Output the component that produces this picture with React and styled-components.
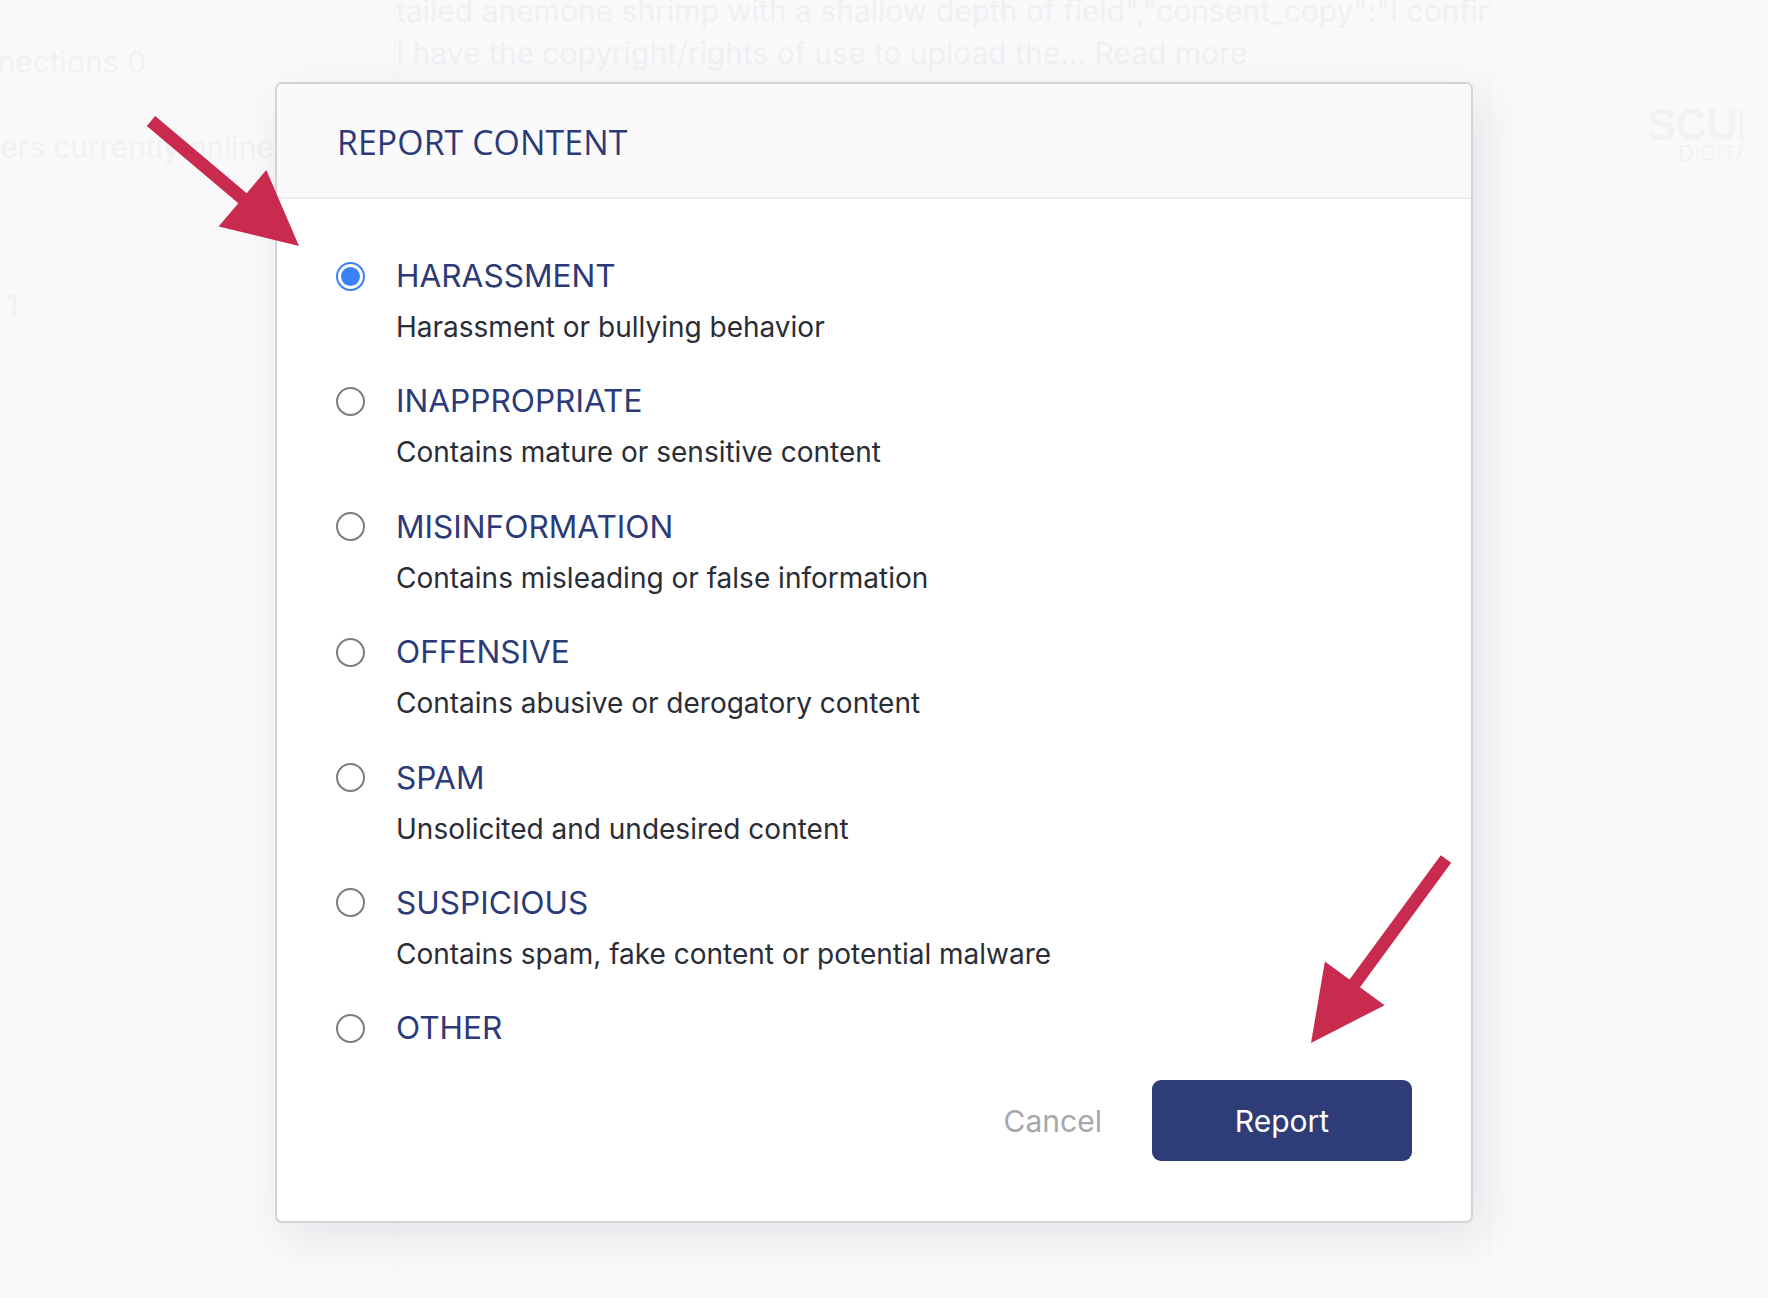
import styled, { createGlobalStyle } from "styled-components";
import { useState } from "react";

const GlobalStyle = createGlobalStyle`
  html, body {
    margin: 0;
    padding: 0;
    background: #f9f9fb;
  }
  * {
    box-sizing: border-box;
  }
`;

const options = [
  { id: "harassment", label: "HARASSMENT", desc: "Harassment or bullying behavior" },
  { id: "inappropriate", label: "INAPPROPRIATE", desc: "Contains mature or sensitive content" },
  { id: "misinformation", label: "MISINFORMATION", desc: "Contains misleading or false information" },
  { id: "offensive", label: "OFFENSIVE", desc: "Contains abusive or derogatory content" },
  { id: "spam", label: "SPAM", desc: "Unsolicited and undesired content" },
  { id: "suspicious", label: "SUSPICIOUS", desc: "Contains spam, fake content or potential malware" },
  { id: "other", label: "OTHER" },
];

const arrows = [
  { from: [151, 121], to: [299, 246] },
  { from: [1446, 859], to: [1311, 1043] },
];

function arrowPoints([x1, y1], [x2, y2], shaft = 13, headLen = 74, headHalf = 37) {
  const dx = x2 - x1;
  const dy = y2 - y1;
  const len = Math.hypot(dx, dy);
  const ux = dx / len;
  const uy = dy / len;
  const nx = -uy;
  const ny = ux;
  const bx = x2 - ux * headLen;
  const by = y2 - uy * headLen;
  const s = shaft / 2;
  const pts = [
    [x1 + nx * s, y1 + ny * s],
    [bx + nx * s, by + ny * s],
    [bx + nx * headHalf, by + ny * headHalf],
    [x2, y2],
    [bx - nx * headHalf, by - ny * headHalf],
    [bx - nx * s, by - ny * s],
    [x1 - nx * s, y1 - ny * s],
  ];
  return pts.map((p) => p.map((v) => v.toFixed(1)).join(",")).join(" ");
}

function App() {
  const [selected, setSelected] = useState("harassment");

  return (
    <Page>
      <GlobalStyle />
      <BgPage>
        <Sidebar>
          <FaintText $indent={-60}>Connections 0</FaintText>
          <SideDivider />
          <FaintText $indent={-38} $top={27}>Users currently online</FaintText>
          <FaintText $indent={6} $top={118}>1</FaintText>
        </Sidebar>
        <MainColumn>
          <FeedText>
            tailed anemone shrimp with a shallow depth of field","consent_copy":"I confirm that
          </FeedText>
          <FeedText>I have the copyright/rights of use to upload the... Read more</FeedText>
        </MainColumn>
        <RightColumn>
          <Logo>
            <LogoMark>SCUE</LogoMark>
            <LogoSub>.DIGITAL</LogoSub>
          </Logo>
        </RightColumn>
      </BgPage>

      <ModalLayer>
        <Modal>
          <Header>
            <Title>REPORT CONTENT</Title>
          </Header>
          <Body>
            <OptionList>
              {options.map((opt) => (
                <Option key={opt.id} onClick={() => setSelected(opt.id)}>
                  <Radio $checked={selected === opt.id} />
                  <Label>{opt.label}</Label>
                  {opt.desc && <Desc>{opt.desc}</Desc>}
                </Option>
              ))}
            </OptionList>
            <Actions>
              <CancelButton>Cancel</CancelButton>
              <ReportButton>Report</ReportButton>
            </Actions>
          </Body>
        </Modal>
      </ModalLayer>

      <ArrowCanvas width="1768" height="1298" viewBox="0 0 1768 1298">
        {arrows.map((a, i) => (
          <polygon key={i} points={arrowPoints(a.from, a.to)} fill="#c92b4f" />
        ))}
      </ArrowCanvas>
    </Page>
  );
}

export default App;

const Page = styled.div`
  position: relative;
  width: 1768px;
  height: 1298px;
  overflow: hidden;
  background: #f9f9fb;
  font-family: Inter, "Liberation Sans", sans-serif;
`;

const BgPage = styled.div`
  display: grid;
  grid-template-columns: 395px 1095px 72px 1fr;
  height: 100%;
`;

const Sidebar = styled.div`
  display: flex;
  flex-direction: column;
  padding-top: 42px;
  overflow: hidden;
`;

const SideDivider = styled.div`
  height: 1px;
  margin-top: 17px;
  background: #f5f5f8;
`;

const FaintText = styled.div`
  font-size: 30px;
  line-height: 40px;
  color: #f1f1f4;
  white-space: nowrap;
  margin-left: ${(p) => p.$indent || 0}px;
  margin-top: ${(p) => p.$top || 0}px;
`;

const MainColumn = styled.div`
  display: flex;
  flex-direction: column;
  margin-top: -10px;
  overflow: hidden;
  border-left: 1px solid #f5f5f7;
  border-right: 1px solid #f5f5f7;
`;

const FeedText = styled.div`
  font-size: 30px;
  line-height: 42px;
  color: #f0f0f3;
  white-space: nowrap;
`;

const RightColumn = styled.div`
  grid-column: 4;
  padding: 106px 0 0 84px;
  border-left: 1px solid #f5f5f7;
`;

const Logo = styled.div`
  display: flex;
  flex-direction: column;
  width: 96px;
  overflow: hidden;
`;

const LogoMark = styled.div`
  font-family: "Liberation Sans", Arial, sans-serif;
  font-weight: 700;
  font-size: 44px;
  line-height: 38px;
  color: #f2f2f5;
  letter-spacing: -1px;
  white-space: nowrap;
`;

const LogoSub = styled.div`
  margin-left: 25px;
  font-size: 22px;
  line-height: 18px;
  color: #f2f2f5;
  white-space: nowrap;
`;

const ModalLayer = styled.div`
  position: absolute;
  inset: 0;
  padding: 82px 0 0 275px;
`;

const Modal = styled.div`
  width: 1198px;
  background: #ffffff;
  border: 2px solid #d3d4d8;
  border-radius: 7px;
  overflow: hidden;
  box-shadow: 10px 14px 44px rgba(30, 35, 60, 0.09);
`;

const Header = styled.div`
  display: flex;
  align-items: center;
  height: 115px;
  padding: 2px 60px 0;
  background: #fafafb;
  border-bottom: 2px solid #ededf1;
`;

const Title = styled.h2`
  margin: 0;
  font-family: "Open Sans", "Noto Sans", sans-serif;
  font-weight: 400;
  font-size: 33.8px;
  color: #2d3a78;
  letter-spacing: 0.1px;
`;

const Body = styled.div`
  padding: 57px 59px 60px 59px;
`;

const OptionList = styled.div`
  display: flex;
  flex-direction: column;
  gap: 36.4px;
`;

const Option = styled.label`
  display: grid;
  grid-template-columns: 30px 1fr;
  column-gap: 30px;
  row-gap: 13px;
  align-items: center;
  cursor: pointer;
`;

const Radio = styled.span`
  position: relative;
  width: 29px;
  height: 29px;
  border-radius: 50%;
  border: 2px solid ${(p) => (p.$checked ? "#3b82f6" : "#7d7d7d")};
  background: #fff;

  &::after {
    content: "";
    position: absolute;
    inset: 3px;
    border-radius: 50%;
    background: ${(p) => (p.$checked ? "#3b82f6" : "transparent")};
  }
`;

const Label = styled.span`
  font-size: 31.6px;
  line-height: 40px;
  font-weight: 400;
  color: #2d3a78;
`;

const Desc = styled.span`
  grid-column: 2;
  font-size: 28px;
  line-height: 36px;
  color: #2a2d36;
`;

const Actions = styled.div`
  display: flex;
  justify-content: flex-end;
  align-items: center;
  gap: 50px;
  margin-top: 32px;
`;

const CancelButton = styled.button`
  border: none;
  background: none;
  padding: 0;
  font-family: Inter, "Liberation Sans", sans-serif;
  font-size: 30px;
  color: #a6a7ac;
  cursor: pointer;
`;

const ReportButton = styled.button`
  width: 260px;
  height: 81px;
  border: none;
  border-radius: 9px;
  background: #2e3d77;
  color: #ffffff;
  font-family: Inter, "Liberation Sans", sans-serif;
  font-size: 30px;
  cursor: pointer;
`;

const ArrowCanvas = styled.svg`
  position: absolute;
  top: 0;
  left: 0;
  pointer-events: none;
`;
